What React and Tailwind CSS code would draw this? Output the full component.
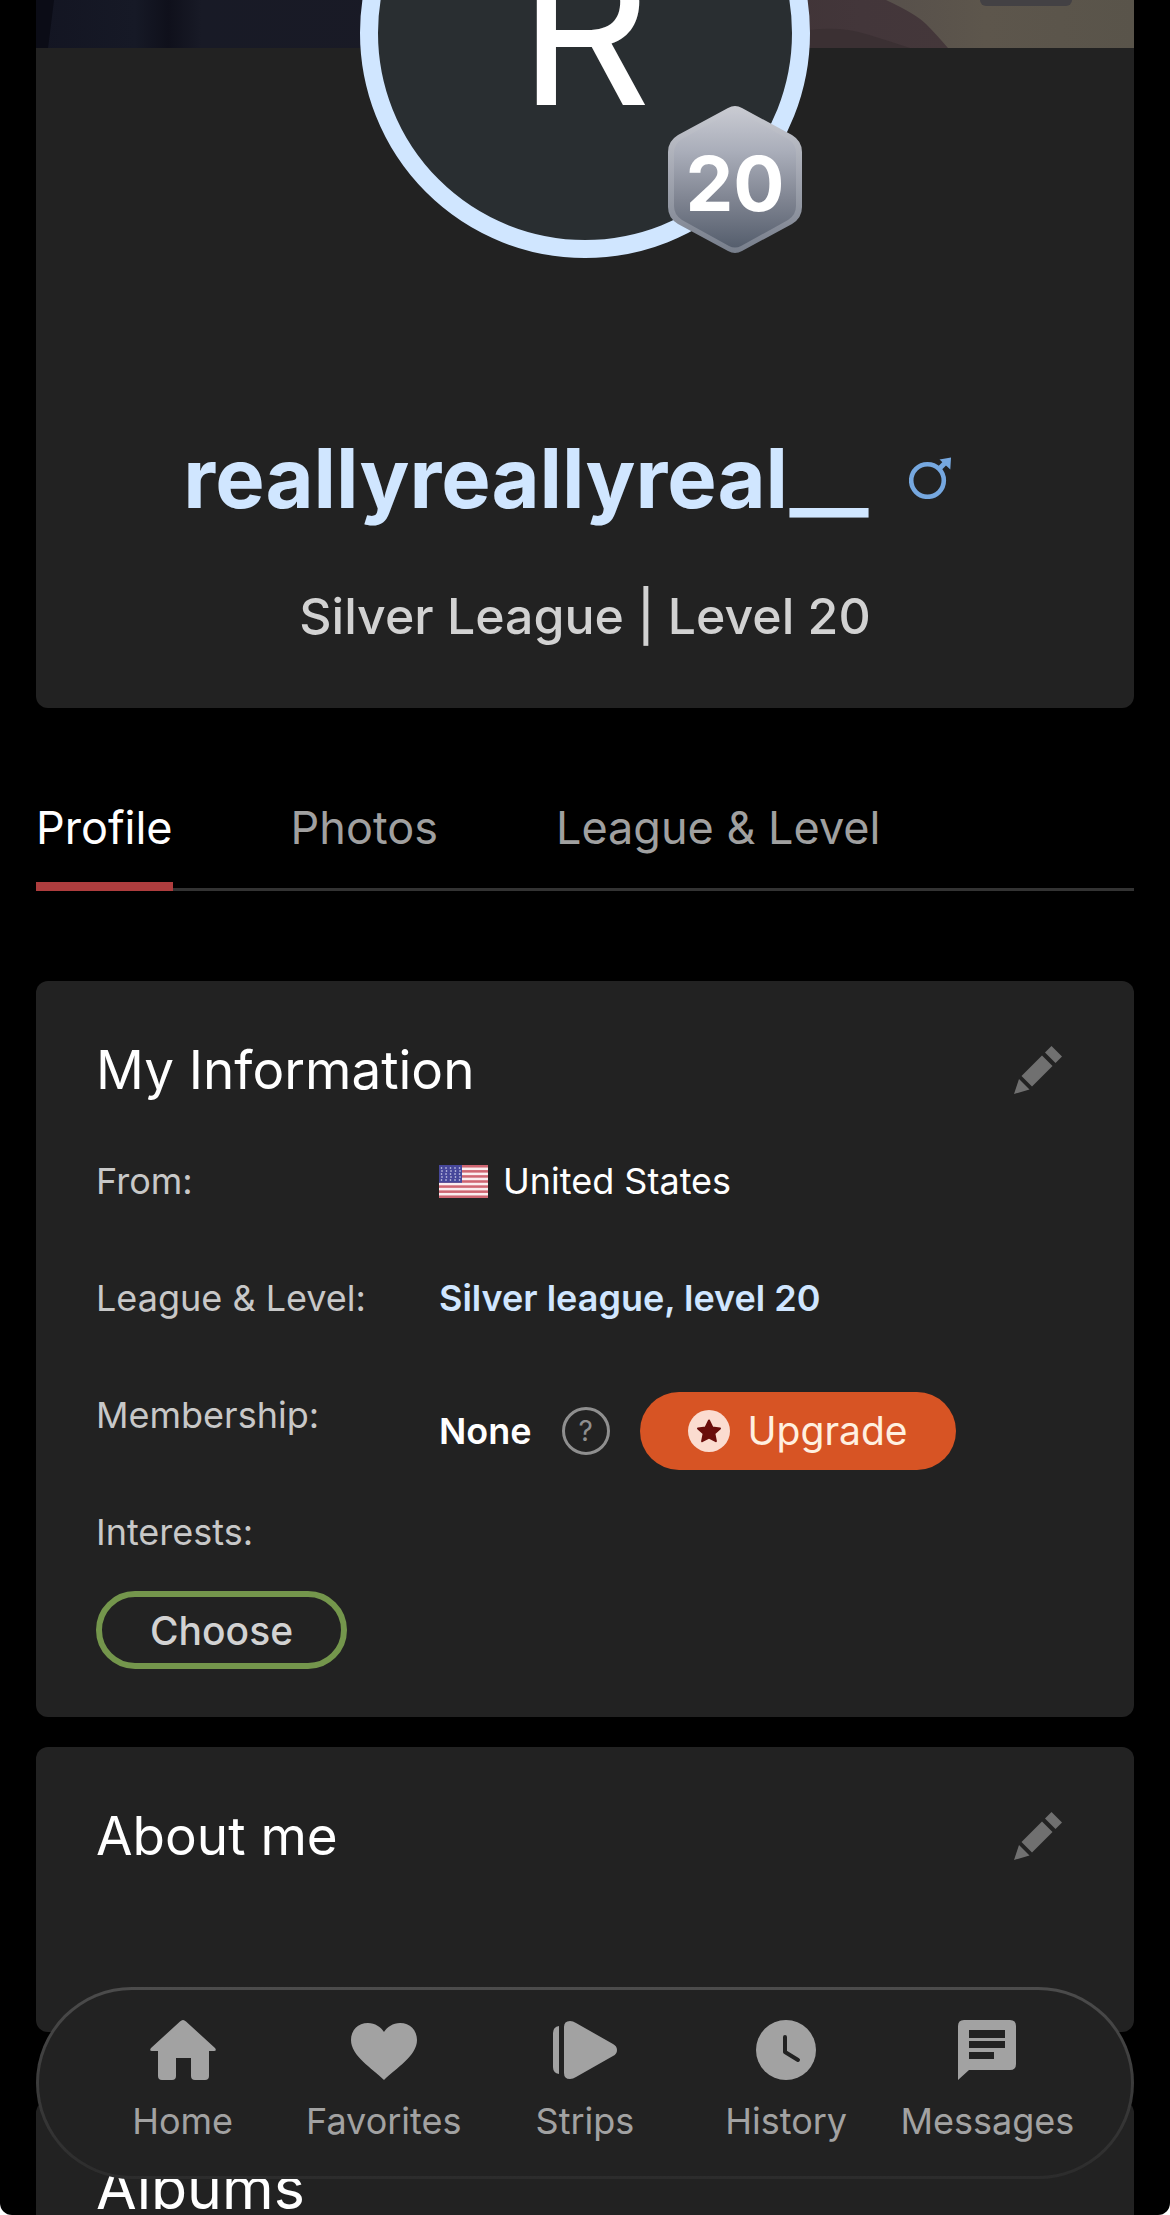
import React, { useState } from 'react';

const tabs = ['Profile', 'Photos', 'League & Level'];

function CoverArt() {
  return (
    <svg viewBox="0 0 1098 48" preserveAspectRatio="none" className="absolute inset-0 size-full" aria-hidden="true">
      <defs>
        <linearGradient id="coverDark" x1="0" y1="0" x2="1" y2="0">
          <stop offset="0" stopColor="#131522" />
          <stop offset="0.180" stopColor="#161926" />
          <stop offset="0.240" stopColor="#0f101b" />
          <stop offset="0.300" stopColor="#181a26" />
          <stop offset="1" stopColor="#1a1a25" />
        </linearGradient>
        <linearGradient id="coverWarm" x1="0" y1="0" x2="1" y2="0">
          <stop offset="0" stopColor="#3a3132" />
          <stop offset="0.500" stopColor="#43363a" />
          <stop offset="1" stopColor="#46393a" />
        </linearGradient>
        <linearGradient id="coverLight" x1="0" y1="0" x2="1" y2="0">
          <stop offset="0" stopColor="#57504b" />
          <stop offset="0.400" stopColor="#5d564c" />
          <stop offset="1" stopColor="#59544a" />
        </linearGradient>
      </defs>
      <rect width="550" height="48" fill="url(#coverDark)" />
      <path d="M0 0h18L12 48H0z" fill="#0b0c16" />
      <rect x="550" width="548" height="48" fill="url(#coverWarm)" />
      <path d="M774 30q30-4 56 4t44 14H774z" fill="#3b3033" />
      <path d="M850 0h248v48H912q-12-14-22-24T850 0z" fill="url(#coverLight)" />
    </svg>
  );
}

function MaleIcon() {
  return (
    <svg viewBox="0 0 42 42" className="size-[42px]" fill="none" role="img" aria-label="Male">
      <circle cx="18.500" cy="23.500" r="16.300" stroke="#76a8e0" strokeWidth="4.600" />
      <path d="M30 12l6-6" stroke="#76a8e0" strokeWidth="5" />
      <path d="M42 0.500 41.300 12.500 30.500 2.500z" fill="#76a8e0" />
    </svg>
  );
}

function PencilIcon() {
  return (
    <svg viewBox="0 0 48 48" className="size-12" fill="#707070" aria-hidden="true">
      <path d="M37.500 0 48 10.500 41.500 17 31 6.500z" />
      <path d="M28 9.500 38.500 20 18 40.500 7.500 30z" />
      <path d="M5 33 15.500 43.500 0 48z" />
    </svg>
  );
}

function UsFlag() {
  const stripes = [0, 2, 4, 6, 8, 10, 12];
  const rows = [2, 5, 8, 11, 14];

  return (
    <svg viewBox="0 0 49 33" className="h-[33px] w-[49px]" preserveAspectRatio="none" aria-hidden="true">
      <rect width="49" height="33" fill="#fbeef0" />
      {stripes.map(n => (
        <rect key={n} y={(n * 33) / 13} width="49" height={33 / 13} fill="#cf6672" />
      ))}
      <rect width="23" height="17.800" fill="#46479a" />
      {rows.map((y, i) => (
        <g key={y} fill="#dfe0f5">
          {[2.500, 7, 11.500, 16, 20.500].map(x => (
            <circle key={x} cx={i % 2 ? x + 0.5 : x} cy={y + 1} r="0.800" />
          ))}
        </g>
      ))}
    </svg>
  );
}

function LevelBadge({ level }) {
  return (
    <div className="absolute top-[298px] left-[308px] flex h-[147px] w-[134px] items-center justify-center pt-1.5">
      <svg viewBox="0 0 134 147" className="absolute inset-0 size-full" aria-hidden="true">
        <defs>
          <linearGradient id="badgeEdge" x1="0" y1="0" x2="0" y2="1">
            <stop offset="0" stopColor="#c9cbd2" />
            <stop offset="0.500" stopColor="#a0a4af" />
            <stop offset="1" stopColor="#777e8b" />
          </linearGradient>
          <linearGradient id="badgeFill" x1="0" y1="0" x2="0" y2="1">
            <stop offset="0" stopColor="#c6c8d0" />
            <stop offset="0.300" stopColor="#a9adb9" />
            <stop offset="0.650" stopColor="#7f8491" />
            <stop offset="1" stopColor="#555e6d" />
          </linearGradient>
        </defs>
        <path
          d="M60 2q7-4 14 0l50 27q10 6 10 17v55q0 11-10 17L74 145q-7 4-14 0L10 118Q0 112 0 101V46Q0 35 10 29z"
          fill="url(#badgeEdge)"
        />
        <path
          d="M61 7q6-3 12 0l47 26q8 5 8 14v53q0 9-8 14L73 140q-6 3-12 0L14 114q-8-5-8-14V47q0-9 8-14z"
          fill="url(#badgeFill)"
        />
      </svg>
      <span className="relative text-[76px] leading-none font-bold text-white">{level}</span>
    </div>
  );
}

function HomeIcon() {
  return (
    <svg viewBox="0 0 66 60" className="h-[60px] w-[66px]" fill="currentColor" aria-hidden="true">
      <path d="M30 1.500q3-3 6 0L65 28q2 3-1 3h-5v25q0 4-4 4H45q-4 0-4-4V38H26v18q0 4-4 4H12q-4 0-4-4V31H2q-3 0-1-3z" />
    </svg>
  );
}

function HeartIcon() {
  return (
    <svg viewBox="0 0 66 60" className="h-[60px] w-[66px]" fill="currentColor" aria-hidden="true">
      <path d="M33 60C21 48 0 36 0 20 0 10 7 3 17 3c7 0 13 4 16 9 3-5 9-9 16-9 10 0 17 7 17 17 0 16-21 28-33 40z" />
    </svg>
  );
}

function StripsIcon() {
  return (
    <svg viewBox="0 0 64 60" className="h-[60px] w-[64px]" fill="currentColor" aria-hidden="true">
      <path d="M6 6v48q-6-1-6-7V13q0-6 6-7z" />
      <path d="M11 7q0-6 6-6 3 0 6 2l37 21q4 2 4 6t-4 6L23 57q-3 2-6 2-6 0-6-6z" />
    </svg>
  );
}

function ClockIcon() {
  return (
    <svg viewBox="0 0 60 60" className="size-[60px]" aria-hidden="true">
      <circle cx="30" cy="30" r="30" fill="currentColor" />
      <path d="M29 17v15l13 8" fill="none" stroke="#222" strokeWidth="4" strokeLinecap="round" strokeLinejoin="round" />
    </svg>
  );
}

function MessageIcon() {
  return (
    <svg viewBox="0 0 58 60" className="h-[60px] w-[58px]" aria-hidden="true">
      <path d="M6 0h46q6 0 6 6v38q0 6-6 6H11L0 60V6q0-6 6-6z" fill="currentColor" />
      <path d="M11 10h36v8H11zM11 21h36v7H11zM11 32h25v7H11z" fill="#222" />
    </svg>
  );
}

const navItems = [
  { label: 'Home', Icon: HomeIcon },
  { label: 'Favorites', Icon: HeartIcon },
  { label: 'Strips', Icon: StripsIcon },
  { label: 'History', Icon: ClockIcon },
  { label: 'Messages', Icon: MessageIcon },
];

function EditableHeader({ title }) {
  return (
    <div className="flex items-center justify-between pr-3">
      <h2 className="text-[53px] leading-[60px]">{title}</h2>
      <button type="button" aria-label={`Edit ${title}`}>
        <PencilIcon />
      </button>
    </div>
  );
}

function InfoRow({ label, children }) {
  return (
    <div className="flex h-[117px] items-start">
      <dt className="w-[343px] shrink-0 text-[#c8c8c8]">{label}</dt>
      <dd>{children}</dd>
    </div>
  );
}

export default function App() {
  const [activeTab, setActiveTab] = useState('Profile');

  return (
    <div className="h-screen bg-white font-['Inter',sans-serif] text-white">
      <div className="h-full overflow-hidden rounded-b-xl bg-black px-9">
        <header className="rounded-b-xl bg-[#222] pb-[60px]">
          <div className="relative flex h-12 justify-end pr-[62px]">
            <CoverArt />
            <div className="relative h-1.5 w-[92px] rounded-b-xl bg-[#434144]" />
            {/* avatar hangs over the lower edge of the cover */}
            <div className="absolute -top-48 left-1/2 -ml-[225px] size-[450px]">
              <div className="flex size-full items-center justify-center rounded-full border-[18px] border-[#d0e6ff] bg-[#292e31] pb-1.5">
                <span className="text-[206px] leading-none">R</span>
              </div>
              <LevelBadge level={20} />
            </div>
          </div>

          <div className="mt-[378px] flex items-center justify-center gap-10 pr-9">
            <h1 className="text-[83px] leading-[104px] font-bold text-[#d0e6ff]">reallyreallyreal__</h1>
            <MaleIcon />
          </div>
          <p className="mt-[54px] text-center text-[50px] leading-[64px] font-medium text-[#d2d2d2]">
            Silver League | Level 20
          </p>
        </header>

        <div role="tablist" className="mt-[90px] flex gap-[118px] border-b-[3px] border-[#333]">
          {tabs.map(tab => (
            <button
              key={tab}
              type="button"
              role="tab"
              aria-selected={activeTab === tab}
              onClick={() => setActiveTab(tab)}
              className={`-mb-[3px] border-b-[9px] pb-6 text-[45px] leading-[60px] ${
                activeTab === tab ? 'border-[#ae3d3e] text-white' : 'border-transparent text-[#a0a0a0]'
              }`}
            >
              {tab}
            </button>
          ))}
        </div>

        <section className="mt-[90px] rounded-xl bg-[#222] px-[60px] pt-[59px] pb-12">
          <EditableHeader title="My Information" />
          <dl className="mt-[54px] text-[36px] leading-[54px]">
            <InfoRow label="From:">
              <div className="flex items-center gap-[15px]">
                <UsFlag />
                <span>United States</span>
              </div>
            </InfoRow>
            <InfoRow label="League & Level:">
              <span className="font-semibold text-[#d0e6ff]">Silver league, level 20</span>
            </InfoRow>
            <InfoRow label="Membership:">
              <div className="flex items-center gap-[30px] pt-1">
                <span className="font-semibold">None</span>
                <button
                  type="button"
                  aria-label="About membership"
                  className="flex size-12 items-center justify-center rounded-full border-[3px] border-[#8f8f8f] text-[28px] leading-none text-[#8f8f8f]"
                >
                  ?
                </button>
                <button
                  type="button"
                  className="flex h-[78px] items-center gap-[18px] rounded-full bg-[#d75424] px-12 text-[39px] text-[#fff0e0]"
                >
                  <svg viewBox="0 0 42 42" className="size-[42px]" aria-hidden="true">
                    <circle cx="21" cy="21" r="21" fill="#fbdcd0" />
                    <path
                      d="M21 10.500l3.400 7 7.600.9-5.600 5.200 1.500 7.600-6.900-3.700-6.900 3.700 1.500-7.600-5.600-5.200 7.600-.9z"
                      fill="#6a0d0b"
                      stroke="#6a0d0b"
                      strokeWidth="2"
                      strokeLinejoin="round"
                    />
                  </svg>
                  Upgrade
                </button>
              </div>
            </InfoRow>
            <div>
              <dt className="text-[#c8c8c8]">Interests:</dt>
              <dd className="mt-8">
                <button
                  type="button"
                  className="h-[78px] rounded-full border-[6px] border-[#74964c] px-12 text-[39px] leading-none font-medium text-[#d2d2d2]"
                >
                  Choose
                </button>
              </dd>
            </div>
          </dl>
        </section>

        <section className="mt-[30px] rounded-xl bg-[#222] px-[60px] pt-[59px] pb-[166px]">
          <EditableHeader title="About me" />
        </section>

        <section className="mt-[69px] rounded-t-xl bg-[#222] px-[60px] pt-[57px] pb-[300px]">
          <h2 className="text-[59px] leading-[60px]">Albums</h2>
        </section>
      </div>

      {/* the outer layer is the border: lighter on top, fading towards the bottom */}
      <nav className="fixed inset-x-9 bottom-9 rounded-full bg-linear-to-b from-[#4c4c4c] to-[#2c2c2c] p-[3px]">
        <ul className="grid grid-cols-5 rounded-full bg-[#222] px-[43px] pt-[30px] pb-[31px] text-[#a2a2a2]">
          {navItems.map(({ label, Icon }) => (
            <li key={label}>
              <a href={`#${label.toLowerCase()}`} className="flex flex-col items-center gap-[17px]">
                <Icon />
                <span className="text-[36px] leading-[48px]">{label}</span>
              </a>
            </li>
          ))}
        </ul>
      </nav>
    </div>
  );
}
